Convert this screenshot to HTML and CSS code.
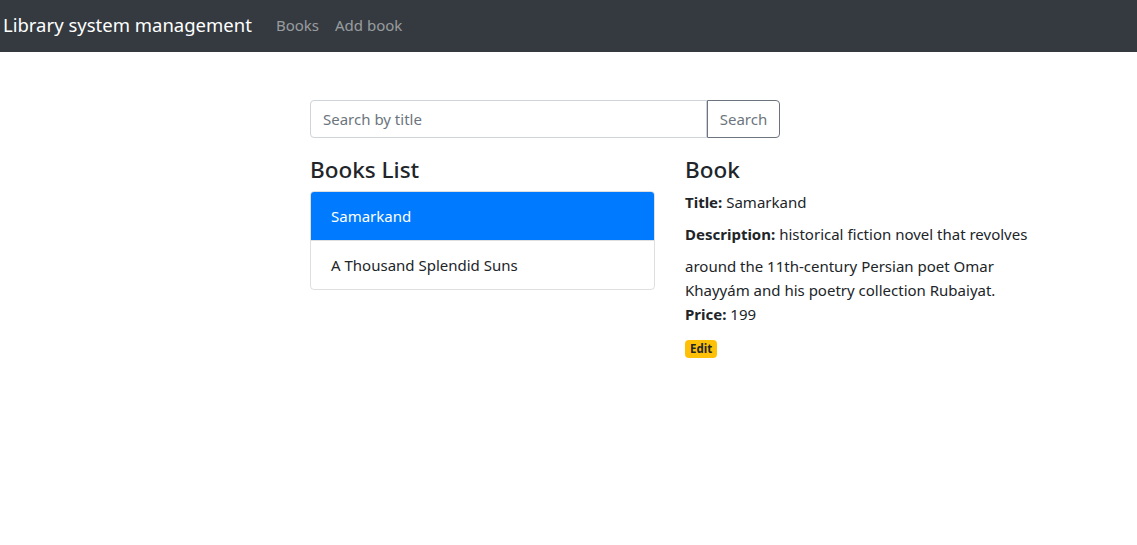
FILE: index.html
```html
<!DOCTYPE html>
<html lang="en">
<head>
<meta charset="utf-8">
<title>Library system management</title>
<link rel="stylesheet" href="styles.css">
</head>
<body>
<nav class="navbar">
  <a class="brand" href="#">Library system management</a>
  <div class="nav-links">
    <a class="nav-link" href="#">Books</a>
    <a class="nav-link" href="#">Add book</a>
  </div>
</nav>
<main class="page">
  <div class="list">
    <div class="col-8">
      <div class="input-group">
        <input class="form-control" type="text" placeholder="Search by title">
        <button class="btn-outline" type="button">Search</button>
      </div>
    </div>
    <div class="col-6">
      <h4 class="heading">Books List</h4>
      <ul class="list-group">
        <li class="list-item active">Samarkand</li>
        <li class="list-item">A Thousand Splendid Suns</li>
      </ul>
    </div>
    <div class="col-6">
      <h4 class="heading">Book</h4>
      <div class="field"><label class="label"><strong>Title:</strong></label> <span>Samarkand</span></div>
      <div class="field"><label class="label"><strong>Description:</strong></label> <span>historical fiction novel that revolves around the 11th-century Persian poet Omar Khayyám and his poetry collection Rubaiyat.</span></div>
      <div class="field"><label class="label"><strong>Price:</strong></label> <span>199</span></div>
      <a class="badge" href="#">Edit</a>
    </div>
  </div>
</main>
</body>
</html>
```
FILE: styles.css
```css
* { box-sizing: border-box; }
body {
  margin: 0;
  font-family: "Noto Sans", "Open Sans", sans-serif;
  font-size: 15px;
  line-height: 24px;
  color: #212529;
  background: #fff;
}
.navbar {
  height: 52px;
  background: #343a40;
  display: flex;
  align-items: center;
  padding: 0 3px 3px;
}
.brand {
  color: #fff;
  font-size: 18.5px;
  text-decoration: none;
  margin-right: 16px;
  white-space: nowrap;
}
.nav-links { display: flex; }
.nav-link {
  color: rgba(255,255,255,.5);
  text-decoration: none;
  padding: 0 8px;
}
.page { padding: 48px 0 0 295px; }
.list {
  width: 750px;
  display: flex;
  flex-wrap: wrap;
}
.col-8 { width: 500px; padding: 0 15px; }
.col-6 { width: 375px; padding: 0 15px; }
.input-group {
  display: flex;
  margin-bottom: 16px;
}
.form-control {
  flex: 1;
  height: 38px;
  padding: 6px 12px;
  font: inherit;
  color: #495057;
  border: 1px solid #ced4da;
  border-radius: 4px 0 0 4px;
  outline: none;
}
.form-control::placeholder { color: #6c757d; }
.btn-outline {
  height: 38px;
  width: 73px;
  padding: 6px 0;
  font: inherit;
  color: #6c757d;
  background: #fff;
  border: 1px solid #6c757d;
  border-radius: 0 4px 4px 0;
}
.heading {
  margin: 0 0 8px;
  padding-top: 1px;
  height: 29px;
  font-size: 22.5px;
  font-weight: 500;
  line-height: 29px;
}
.list-group {
  list-style: none;
  margin: 0;
  padding: 0;
  border: 1px solid rgba(0,0,0,.125);
  border-radius: 4px;
  overflow: hidden;
}
.list-item {
  padding: 12px 20px;
  line-height: 24px;
}
.list-item + .list-item { border-top: 1px solid rgba(0,0,0,.125); }
.list-item.active {
  background: #007bff;
  color: #fff;
  margin: -1px -1px 0;
  padding: 13px 21px 12px;
}
.field { margin-top: -1px; padding-bottom: 1px; }
.label {
  display: inline-block;
  margin-bottom: 8px;
}
.badge {
  display: inline-block;
  background: #ffc107;
  color: #212529;
  font-size: 11.5px;
  font-weight: 700;
  line-height: 1;
  padding: 3px 5px;
  border-radius: 4px;
  text-decoration: none;
}
```
